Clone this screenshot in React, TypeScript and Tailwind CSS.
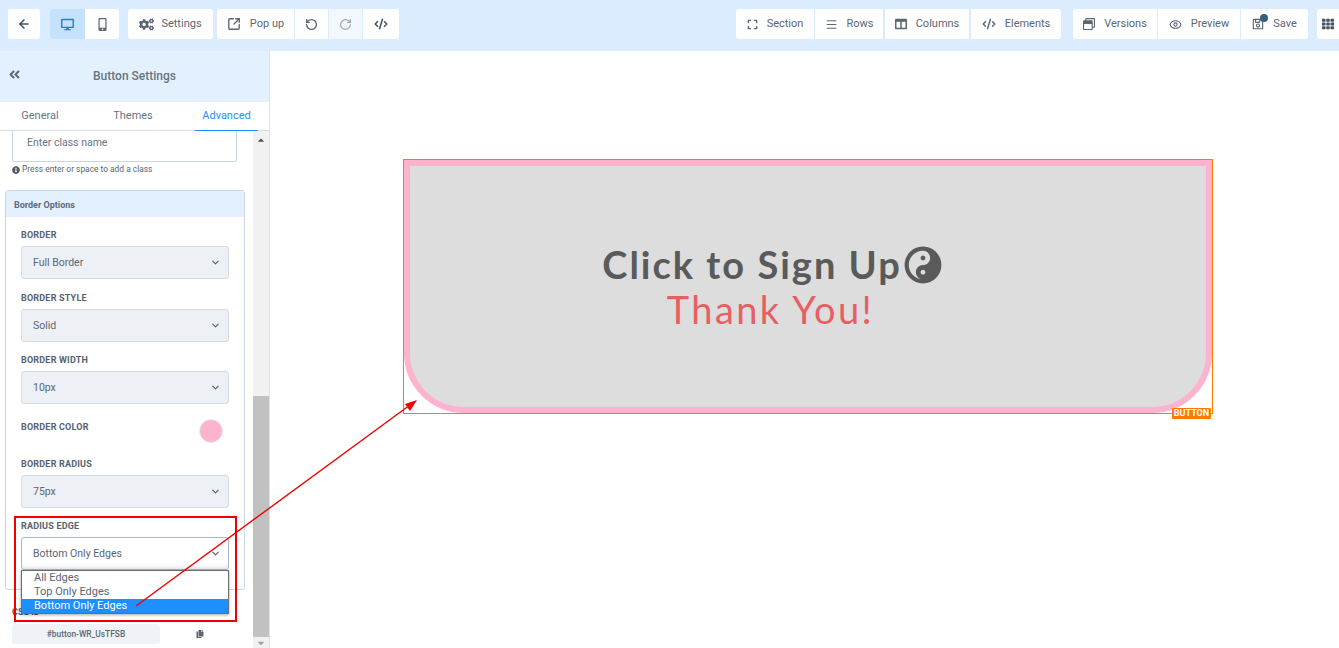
import { ArrowLeft, CodeXml, Eye, Menu, RotateCcw, RotateCw, SquareArrowOutUpRight, ChevronDown } from 'lucide-react'
import { FaAngleDoubleLeft, FaCogs, FaColumns, FaCopy, FaDesktop, FaExpand, FaInfoCircle, FaMobileAlt, FaRegSave, FaRegWindowRestore, FaTh, FaYinYang, FaCaretUp, FaCaretDown } from 'react-icons/fa'
import type { ReactNode } from 'react'

function ToolButton({ icon, label, className = '' }: { icon: ReactNode; label?: string; className?: string }) {
  return (
    <div className={`flex h-[30px] items-center justify-center gap-[9px] bg-white text-[11px] text-[#5b6673] ${className}`}>
      {icon}
      {label && <span>{label}</span>}
    </div>
  )
}

function SelectField({ label, value, open = false, className = '' }: { label: string; value: string; open?: boolean; className?: string }) {
  return (
    <div className={className}>
      <div className="mb-[5px] h-[11px] text-[9px] leading-[11px] font-bold tracking-[0.2px] text-[#56626f] uppercase">{label}</div>
      <div
        className={`flex h-[33px] w-[208px] items-center justify-between rounded-[3px] border pr-[7px] pl-[11px] text-[10.5px] text-[#5b6673] ${
          open ? 'border-[#aab6c3] bg-white shadow-[inset_0_-6px_6px_-6px_rgba(0,0,0,0.18)]' : 'border-[#d3dce6] bg-[#edf1f6]'
        }`}
      >
        <span>{value}</span>
        <ChevronDown size={11} strokeWidth={2.4} className="text-[#4f5b68]" />
      </div>
    </div>
  )
}

export default function App() {
  return (
    <div className="relative flex h-[648px] w-[1339px] flex-col overflow-hidden bg-white font-['Roboto',sans-serif]">
      {/* top toolbar */}
      <div className="flex h-[51px] shrink-0 items-start bg-[#dbecff] pt-[9px] pl-[8px]">
        <ToolButton icon={<ArrowLeft size={14} strokeWidth={2.6} className="text-[#46525f]" />} className="w-[32px] rounded-[3px]" />
        <div className="ml-[10px] flex overflow-hidden rounded-[3px]">
          <ToolButton icon={<FaDesktop size={13} className="text-[#1b82d8]" />} className="w-[35px] !bg-[#c6e1fc]" />
          <ToolButton icon={<FaMobileAlt size={13} className="text-[#5b6673]" />} className="w-[34px]" />
        </div>
        <ToolButton icon={<FaCogs size={15} className="text-[#5b6673]" />} label="Settings" className="ml-[9px] w-[85px] !gap-[7px] rounded-[3px]" />
        <ToolButton icon={<SquareArrowOutUpRight size={14} strokeWidth={2.3} />} label="Pop up" className="ml-[4px] w-[77px] rounded-l-[3px]" />
        <ToolButton icon={<RotateCcw size={13} strokeWidth={2.5} />} className="ml-[1px] w-[33px]" />
        <ToolButton icon={<RotateCw size={13} strokeWidth={2.2} className="text-[#9aa5b0]" />} className="ml-[1px] w-[33px] !bg-[#f2f8fe]" />
        <ToolButton icon={<CodeXml size={14} strokeWidth={2.6} className="text-[#46525f]" />} className="ml-[1px] w-[36px] rounded-r-[3px]" />

        <ToolButton icon={<FaExpand size={11} />} label="Section" className="ml-[337px] w-[78px] rounded-l-[3px]" />
        <ToolButton icon={<Menu size={13} strokeWidth={2} />} label="Rows" className="ml-[1px] w-[68px]" />
        <ToolButton icon={<FaColumns size={12} />} label="Columns" className="ml-[2px] w-[84px]" />
        <ToolButton icon={<CodeXml size={14} strokeWidth={2.4} />} label="Elements" className="ml-[2px] w-[90px] rounded-r-[3px]" />
        <ToolButton icon={<FaRegWindowRestore size={12} />} label="Versions" className="ml-[12px] w-[84px] rounded-l-[3px]" />
        <ToolButton icon={<Eye size={13} strokeWidth={2} />} label="Preview" className="ml-[1px] w-[82px]" />
        <ToolButton
          icon={
            <span className="relative flex">
              <FaRegSave size={12} className="text-[#5b6673]" />
              <span className="absolute -top-[4px] -right-[4px] size-[8px] rounded-full bg-[#34607f]" />
            </span>
          }
          label="Save"
          className="ml-[1px] w-[67px] rounded-r-[3px]"
        />
        <ToolButton icon={<FaTh size={12} className="text-[#46525f]" />} className="ml-[9px] w-[22px] rounded-l-[3px]" />
      </div>

      <div className="flex min-h-0 flex-1">
        {/* settings sidebar */}
        <aside className="flex w-[270px] shrink-0 flex-col border-r border-[#dde3ea]">
          <div className="relative flex h-[51px] shrink-0 items-center justify-center bg-[#e3f1ff] pb-[2px] text-[12px] font-medium text-[#69747f]">
            <FaAngleDoubleLeft size={13} className="absolute top-[17px] left-[8px] text-[#5b6b7c]" />
            Button Settings
          </div>
          <div className="flex h-[29px] shrink-0 border-b border-[#d5dce3] text-[11px] text-[#69747f]">
            <div className="flex w-[80px] items-center justify-center">General</div>
            <div className="flex w-[106px] items-center justify-center">Themes</div>
            <div className="-mb-px ml-[9px] flex w-[63px] items-center justify-center border-b border-[#1e8fff] text-[#1e8fff]">Advanced</div>
          </div>

          <div className="flex min-h-0 flex-1">
            <div className="w-[253px] overflow-hidden">
              <div className="ml-[12px] flex h-[31px] w-[225px] items-center rounded-b-[3px] border border-t-0 border-[#ccd6e0] pb-[7px] pl-[14px] text-[10.5px] text-[#69747f]">
                Enter class name
              </div>
              <div className="mt-[2px] ml-[12px] flex h-[11px] items-center gap-[2px] text-[8.4px] text-[#5b6673]">
                <FaInfoCircle size={8} className="text-[#4f5b68]" />
                Press enter or space to add a class
              </div>

              <div className="mt-[15px] ml-[5px] h-[400px] w-[240px] rounded-[3px] border border-[#c8d5e2]">
                <div className="flex h-[26px] items-center bg-[#e3f1ff] pt-[4px] pl-[8px] text-[9px] font-bold text-[#5b6b7c]">Border Options</div>
                <div className="pl-[15px]">
                  <SelectField label="Border" value="Full Border" className="mt-[13px]" />
                  <SelectField label="Border Style" value="Solid" className="mt-[14px]" />
                  <SelectField label="Border Width" value="10px" className="mt-[13px]" />
                  <div className="mt-[15px] flex h-[24px] w-[208px] items-center justify-between">
                    <span className="-mt-[6px] text-[9px] font-bold tracking-[0.2px] text-[#56626f] uppercase">Border Color</span>
                    <span className="mr-[6px] size-[24px] rounded-full border border-[#ececec] bg-[#fdb2cd]" />
                  </div>
                  <SelectField label="Border Radius" value="75px" className="mt-[16px]" />
                  <SelectField label="Radius Edge" value="Bottom Only Edges" open className="mt-[13px]" />
                </div>
              </div>

              <div className="mt-[17px] ml-[12px] h-[11px] text-[9px] leading-[11px] font-bold text-[#4f5b68]">CSS ID</div>
              <div className="mt-[6px] ml-[12px] flex items-center">
                <div className="flex h-[20px] w-[148px] items-center justify-center rounded-[3px] bg-[#eff3f7] text-[8.4px] font-medium text-[#5b6673]">#button-WR_UsTFSB</div>
                <FaCopy size={8} className="ml-[36px] text-[#5b6673]" />
              </div>
            </div>

            <div className="flex w-[16px] flex-col items-center bg-[#f1f1f1]">
              <FaCaretUp size={10} className="mt-[4px] h-[10px] text-[#505050]" />
              <div className="mt-[251px] h-[242px] w-full bg-[#c1c1c1]" />
              <FaCaretDown size={10} className="mt-[1px] text-[#a3a3a3]" />
            </div>
          </div>
        </aside>

        {/* canvas */}
        <main className="min-w-0 flex-1 pt-[108px] pl-[133px]">
          <div className="relative h-[255px] w-[810px] border border-[#ff7a00] bg-white">
            <div className="flex h-[253px] flex-col items-center justify-center rounded-b-[60px] border-[6px] border-[#fdb2cd] bg-[#dddddd] pt-[1px] pr-[72px] font-['Lato',sans-serif] text-[38px] leading-[45px]">
              <div className="flex items-center font-bold tracking-[2px] text-[#5a5a5a]">
                Click to Sign Up
                <FaYinYang size={38} className="ml-[2px]" />
              </div>
              <div className="pr-[3px] tracking-[2.4px] text-[#e85f63]">Thank You!</div>
            </div>
            <div className="absolute top-[248px] right-[1px] flex h-[11px] w-[39px] items-center justify-center rounded-[1px] bg-[#ff7a00] text-[9px] font-bold text-white">BUTTON</div>
          </div>
        </main>
      </div>

      {/* open select list */}
      <div className="absolute top-[570px] left-[21px] w-[208px] border border-[#6d6d6d] bg-white text-[11px] leading-[14px] text-[#5b6673] shadow-[0_1px_3px_rgba(0,0,0,0.35)]">
        <div className="pl-[12px]">All Edges</div>
        <div className="pl-[12px]">Top Only Edges</div>
        <div className="bg-[#1e8fff] pl-[12px] text-white">Bottom Only Edges</div>
      </div>

      {/* annotation */}
      <div className="absolute top-[516px] left-[14px] h-[106px] w-[223px] border-[2px] border-[#f00000]" />
      <svg className="absolute top-0 left-0" width="1339" height="648" fill="none">
        <line x1="136" y1="606" x2="410" y2="405" stroke="#f00000" strokeWidth="1.4" />
        <polygon points="417,400 405,404 410,411" fill="#f00000" />
      </svg>
    </div>
  )
}
